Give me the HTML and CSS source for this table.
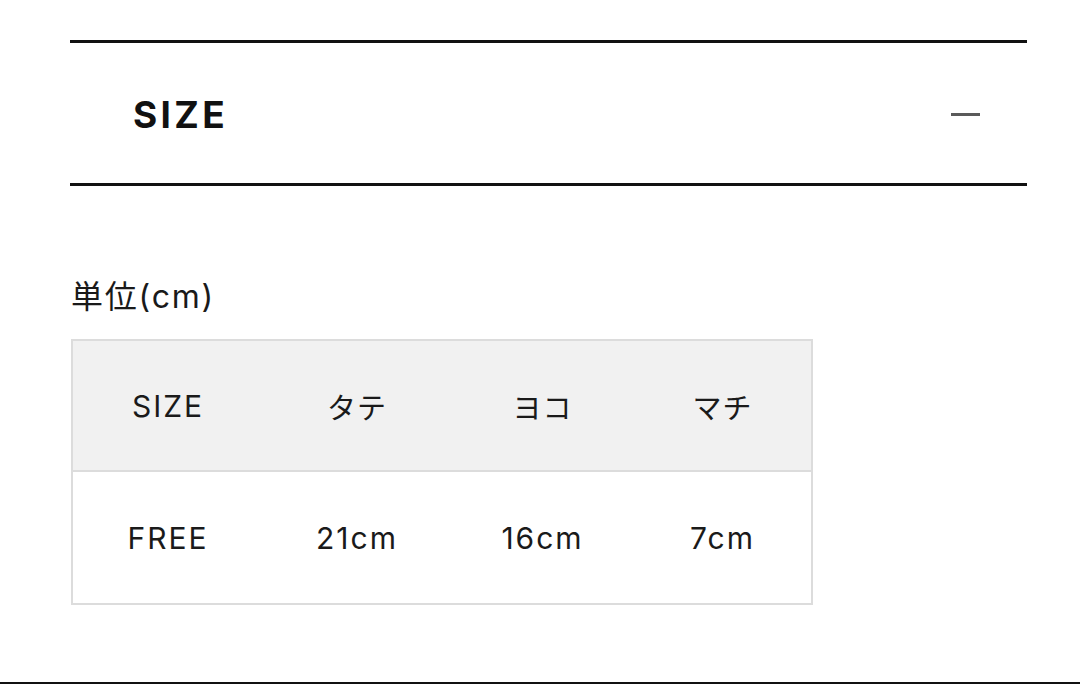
FILE: index.html
```html
<!DOCTYPE html>
<html lang="ja">
<head>
<meta charset="utf-8">
<link rel="stylesheet" href="styles.css">
</head>
<body>
<div class="page">
  <section class="accordion">
    <div class="acc-head">
      <h2 class="acc-title">SIZE</h2>
      <span class="acc-toggle" aria-hidden="true"></span>
    </div>
  </section>
  <div class="acc-body">
    <p class="unit">単位(cm)</p>
    <div class="size-table">
      <div class="cell head">SIZE</div>
      <div class="cell head jp">タテ</div>
      <div class="cell head jp">ヨコ</div>
      <div class="cell head jp">マチ</div>
      <div class="cell">FREE</div>
      <div class="cell">21cm</div>
      <div class="cell">16cm</div>
      <div class="cell">7cm</div>
    </div>
  </div>
</div>
<div class="bottom-rule"></div>
</body>
</html>
```

FILE: styles.css
```css
html, body {
  margin: 0;
  padding: 0;
  background: #fff;
}
body {
  width: 1080px;
  height: 684px;
  display: flex;
  flex-direction: column;
  font-family: Inter, "Noto Sans CJK JP", sans-serif;
  color: #1a1a1a;
}
.page {
  flex: 1;
  padding: 40px 53px 0 70px;
}
.accordion {
  border-top: 3px solid #111;
  border-bottom: 3px solid #111;
}
.acc-head {
  height: 140px;
  display: flex;
  align-items: center;
  justify-content: space-between;
  padding: 0 47px 0 63px;
}
.acc-title {
  margin: 0;
  font-size: 37px;
  font-weight: 700;
  letter-spacing: 0.09em;
  color: #111;
  line-height: 1;
  padding-top: 2px;
}
.acc-toggle {
  display: block;
  width: 29px;
  height: 3px;
  background: #5a5a5a;
  margin-top: 2px;
}
.acc-body {
  padding-top: 91px;
}
.unit {
  margin: 0 0 0 1px;
  font-size: 32px;
  line-height: 40px;
  letter-spacing: 1.7px;
  color: #1a1a1a;
}
.size-table {
  margin-top: 22px;
  width: 738px;
  margin-left: 1px;
  border: 2px solid #dcdcdc;
  display: grid;
  grid-template-columns: 190px 188px 183px 177px;
  grid-template-rows: 131px 131px;
}
.cell {
  display: flex;
  align-items: center;
  justify-content: center;
  font-size: 30px;
  letter-spacing: 2px;
  color: #1a1a1a;
}
.cell.jp {
  font-size: 29px;
  letter-spacing: 1px;
}
.cell.head {
  background: #f1f1f1;
  border-bottom: 2px solid #dcdcdc;
}
.bottom-rule {
  height: 2px;
  background: #111;
}
```
